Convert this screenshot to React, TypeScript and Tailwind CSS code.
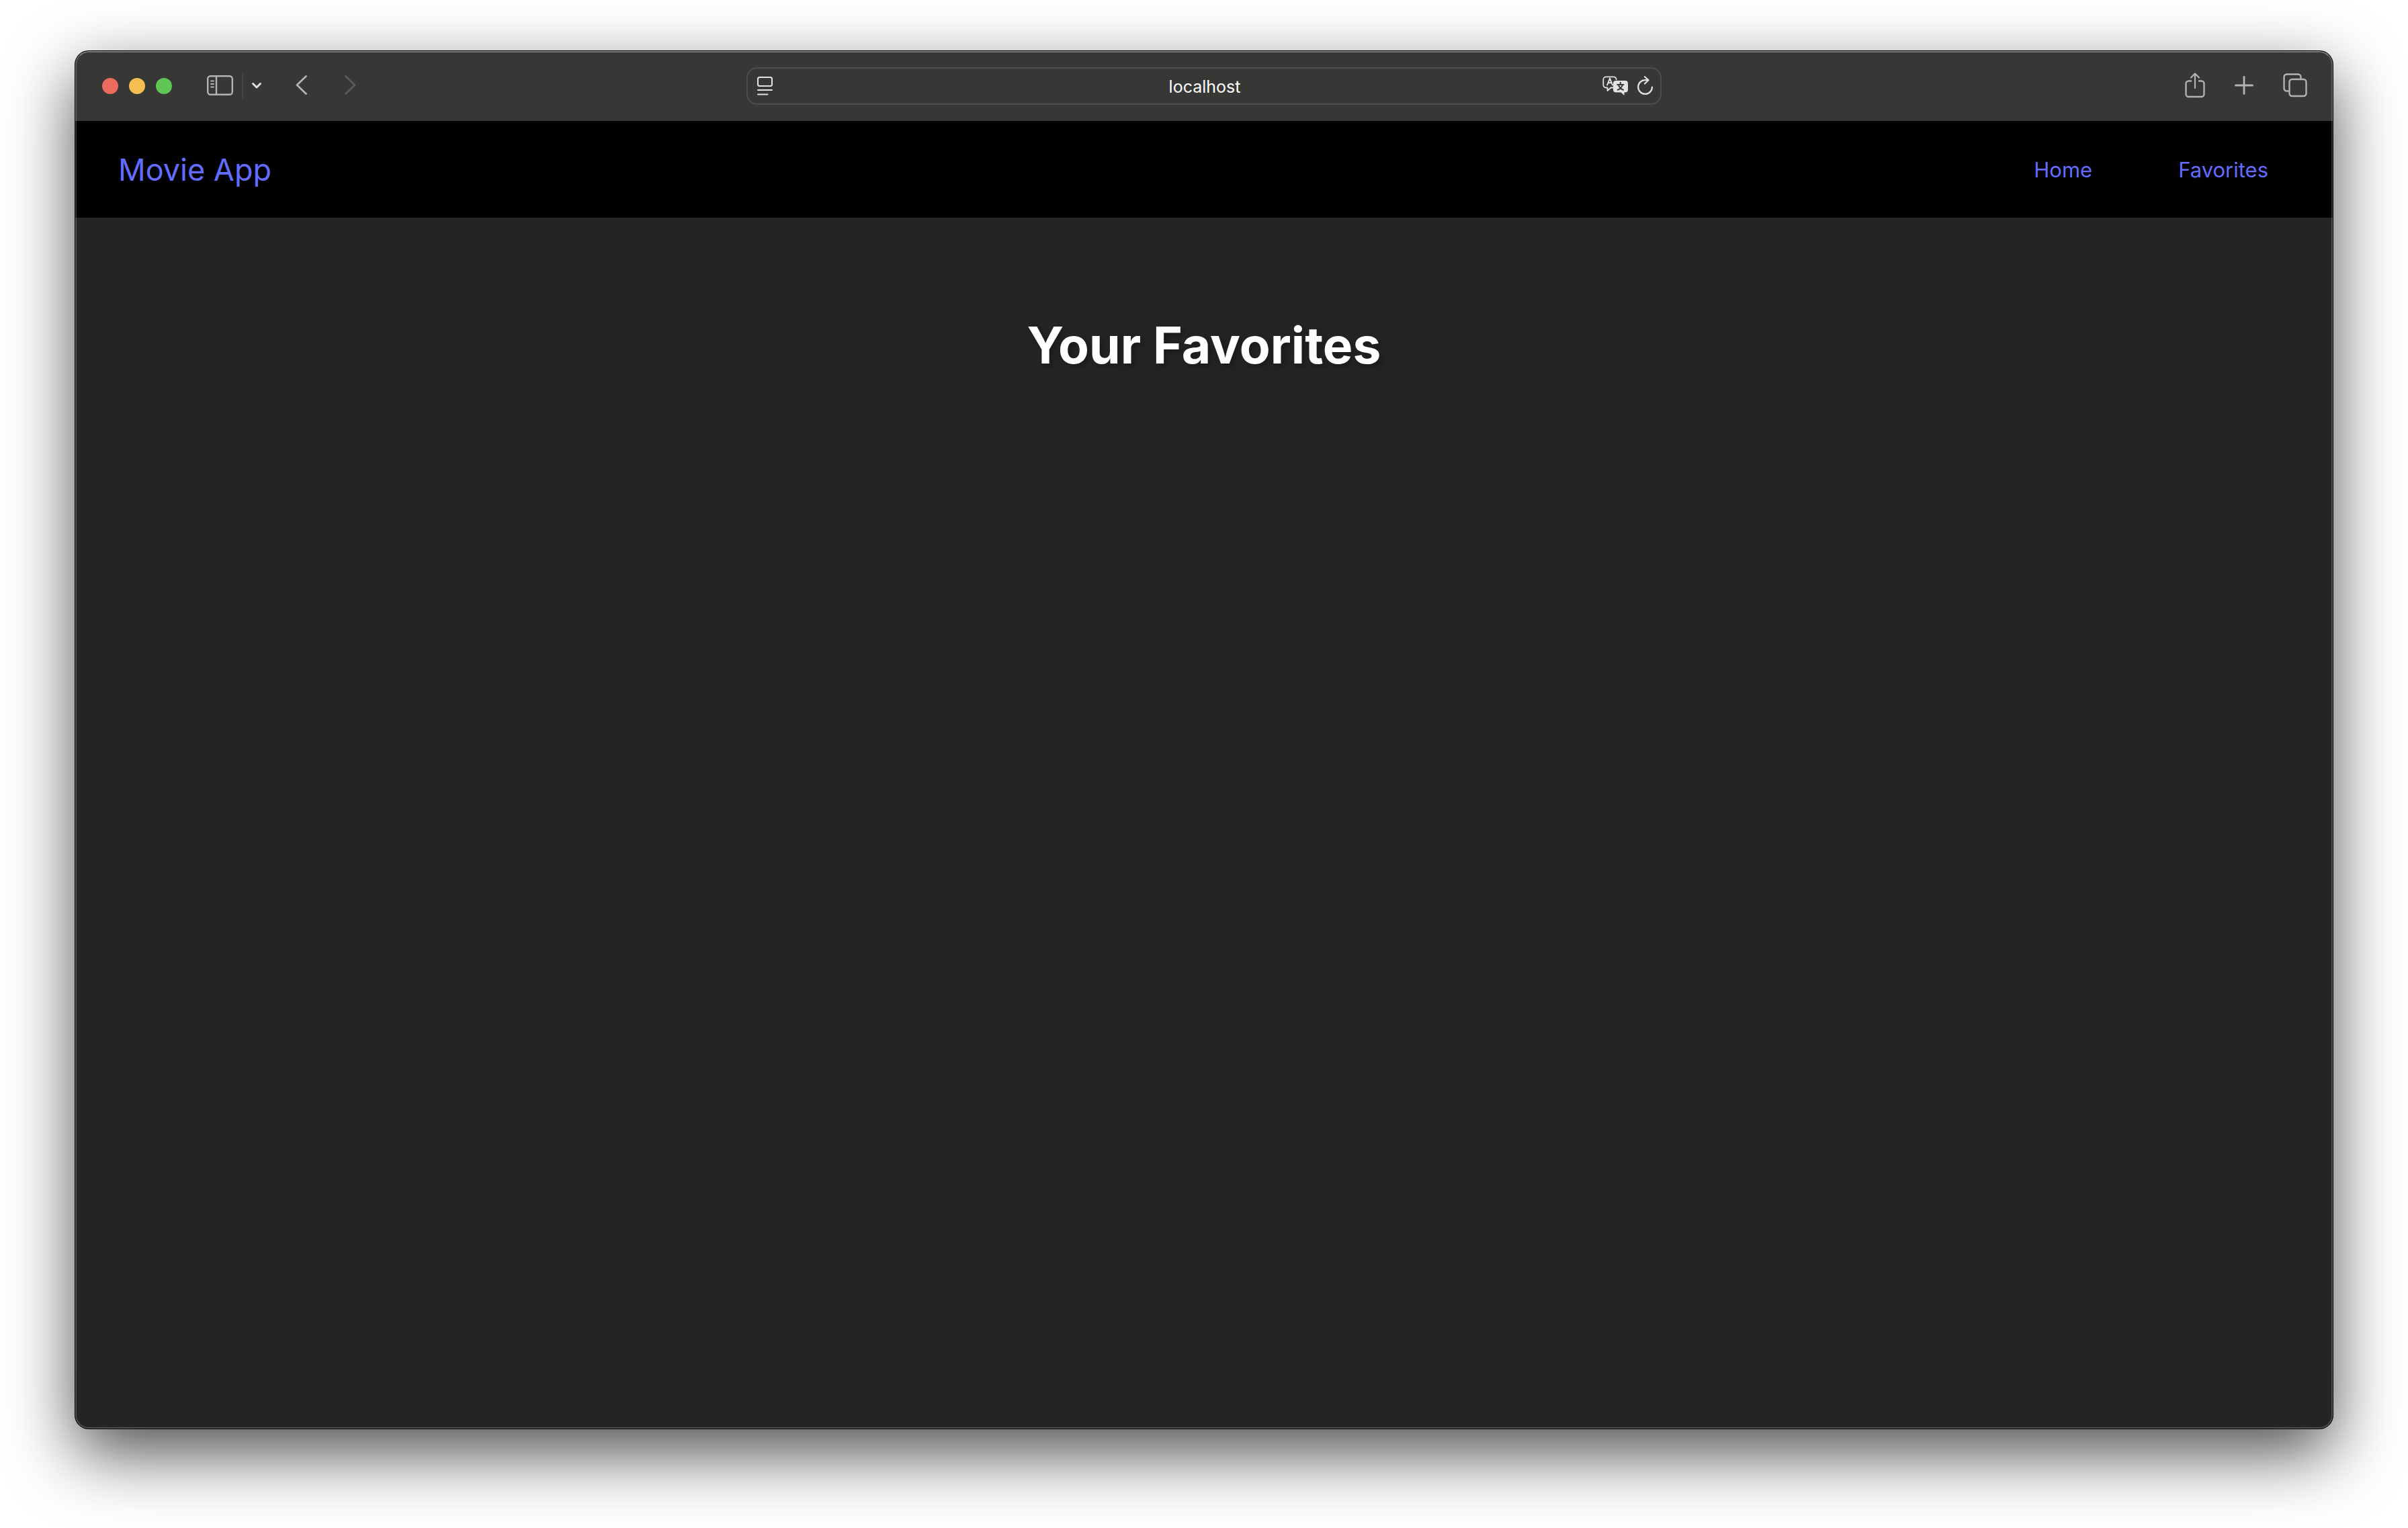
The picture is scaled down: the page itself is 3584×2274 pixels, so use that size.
import type { ReactNode } from "react";

function IconButton({ label, children, className = "" }: { label: string; children: ReactNode; className?: string }) {
  return (
    <button type="button" aria-label={label} className={`flex shrink-0 items-center justify-center ${className}`}>
      {children}
    </button>
  );
}

function SidebarIcon() {
  return (
    <svg width="40" height="32" viewBox="0 0 40 32" fill="none" stroke="currentColor" strokeWidth="2.4" strokeLinecap="round">
      <rect x="1.2" y="1.2" width="36.6" height="27.6" rx="4" />
      <path d="M14 1.5v27" />
      <path d="M6 8.5h4M6 13h4M6 17.5h4" strokeWidth="1.8" />
    </svg>
  );
}

function ReaderIcon() {
  return (
    <svg width="24" height="28" viewBox="0 0 24 28" fill="none" stroke="currentColor" strokeWidth="2" strokeLinecap="round">
      <rect x="1" y="1" width="21" height="13" rx="2.5" />
      <path d="M1 20h21M1 26.500h14.500" />
    </svg>
  );
}

function TranslateIcon() {
  return (
    <svg width="38" height="30" viewBox="0 0 38 30" fill="none" stroke="currentColor" strokeWidth="1.8" strokeLinecap="round" strokeLinejoin="round">
      <path d="M15.5 17.5 h-3 l-5 4.5 v-4.5 h-2 a4.2 4.2 0 0 1 -4.2 -4.2 v-7.8 a4.2 4.2 0 0 1 4.2 -4.2 h11 a4.2 4.2 0 0 1 4.2 3.9" />
      <path d="M7.2 13.5 l3.9 -10 l3.9 10 M8.6 10.3 h5" strokeWidth="2" />
      <path d="M20 7 h14 a4 4 0 0 1 4 4 v9.500 a4 4 0 0 1 -4 4 h-1.500 v4.500 l-5 -4.500 h-7.500 a4 4 0 0 1 -4 -4 v-9.500 a4 4 0 0 1 4 -4 z" fill="currentColor" stroke="none" />
      <path d="M26.800 9.800 v2.400 M22.300 12.900 h9.200 M24 13.400 c1 3.500 3.500 6 7 7.300 M29.800 13.400 c-1 3.500 -3.500 6 -7 7.300" stroke="#373735" strokeWidth="2" />
    </svg>
  );
}

function ReloadIcon() {
  return (
    <svg width="24" height="30" viewBox="0 0 24 30" fill="none" stroke="currentColor" strokeWidth="2.2" strokeLinecap="round" strokeLinejoin="round">
      <path d="M22 16.5 a10.4 10.4 0 1 1 -10.4 -10.4 h4.5" />
      <path d="M11 1.2 l5.5 5 l-5.5 5.3" />
    </svg>
  );
}

function ShareIcon() {
  return (
    <svg width="30" height="38" viewBox="0 0 30 38" fill="none" stroke="currentColor" strokeWidth="2.4" strokeLinecap="round" strokeLinejoin="round">
      <path d="M10 12.5 H5.5 a4 4 0 0 0 -4 4 V32 a4 4 0 0 0 4 4 H24.5 a4 4 0 0 0 4 -4 V16.5 a4 4 0 0 0 -4 -4 H20" strokeLinecap="butt" />
      <path d="M15 23 V2 M9 7.5 L15 1.5 L21 7.5" strokeWidth="2.2" />
    </svg>
  );
}

function TabsIcon() {
  return (
    <svg width="36" height="36" viewBox="0 0 36 36" fill="none" stroke="currentColor" strokeWidth="2.4">
      <path d="M8.5 26.5 H5.5 a4 4 0 0 1 -4 -4 V5.5 a4 4 0 0 1 4 -4 H22.5 a4 4 0 0 1 4 4 V8.5" />
      <rect x="9.5" y="9" width="25" height="25" rx="4" />
    </svg>
  );
}

function Toolbar() {
  return (
    <div className="grid h-[104px] grid-cols-[minmax(0,1fr)_minmax(0,1362px)_minmax(0,1fr)] items-center bg-[#373735] px-[38px] text-[#b3b3b1]">
      <div className="flex items-center pl-0.5">
        <div className="flex gap-4">
          <button type="button" aria-label="Close" className="size-6 rounded-full bg-[#ed6a5e]" />
          <button type="button" aria-label="Minimize" className="size-6 rounded-full bg-[#f5bf4f]" />
          <button type="button" aria-label="Zoom" className="size-6 rounded-full bg-[#61c554]" />
        </div>
        <IconButton label="Show sidebar" className="ml-[52px]">
          <SidebarIcon />
        </IconButton>
        <span className="ml-3 h-9 w-0.5 bg-[#444442]" />
        <IconButton label="Tab groups" className="ml-3 text-[#e0e0df]">
          <svg width="16" height="12" viewBox="0 0 16 12" fill="none" stroke="currentColor" strokeWidth="3" strokeLinecap="round" strokeLinejoin="round">
            <path d="M2.5 2.5 L8 8 L13.5 2.5" />
          </svg>
        </IconButton>
        <IconButton label="Back" className="ml-[50px]">
          <svg width="18" height="32" viewBox="0 0 18 32" fill="none" stroke="currentColor" strokeWidth="2.8" strokeLinecap="round" strokeLinejoin="round">
            <path d="M15.5 1.5 L2 14.5 L15.5 27.5" />
          </svg>
        </IconButton>
        <IconButton label="Forward" className="ml-[54px] text-[#5a5a58]">
          <svg width="18" height="32" viewBox="0 0 18 32" fill="none" stroke="currentColor" strokeWidth="2.8" strokeLinecap="round" strokeLinejoin="round">
            <path d="M2.5 1.5 L16 14.5 L2.5 27.5" />
          </svg>
        </IconButton>
      </div>

      <div className="grid h-14 grid-cols-[88px_minmax(0,1fr)_88px] items-center rounded-2xl border-2 border-[#4d4d4b] text-[#e2e2e0]">
        <IconButton label="Reader" className="ml-[14px] justify-self-start">
          <ReaderIcon />
        </IconButton>
        <input
          type="text"
          aria-label="Address"
          defaultValue="localhost"
          className="w-full min-w-0 bg-transparent pt-0.5 pl-0.5 text-center text-[25px] leading-8 text-white outline-none"
        />
        <div className="flex items-center gap-[14px] justify-self-end pr-2.5">
          <IconButton label="Translate">
            <TranslateIcon />
          </IconButton>
          <IconButton label="Reload">
            <ReloadIcon />
          </IconButton>
        </div>
      </div>

      <div className="flex items-center justify-end gap-11 pb-0.5">
        <IconButton label="Share">
          <ShareIcon />
        </IconButton>
        <IconButton label="New tab">
          <svg width="28" height="28" viewBox="0 0 28 28" fill="none" stroke="currentColor" strokeWidth="2.8" strokeLinecap="round">
            <path d="M14 1.5 V26.5 M1.5 14 H26.5" />
          </svg>
        </IconButton>
        <IconButton label="Tab overview">
          <TabsIcon />
        </IconButton>
      </div>
    </div>
  );
}

function NavBar() {
  return (
    <nav className="flex h-36 items-center justify-between bg-black px-16 pt-0.5 text-[#646cff]">
      <a href="#" className="text-[45px] leading-[72px]">
        Movie App
      </a>
      <div className="flex gap-16 text-[31px] leading-12">
        <a href="#home" className="px-8">
          Home
        </a>
        <a href="#favorites" className="px-8">
          Favorites
        </a>
      </div>
    </nav>
  );
}

export default function App() {
  return (
    <div className="flex min-h-screen flex-col bg-white px-28 pt-[76px] pb-[148px] font-['Inter','Liberation_Sans',sans-serif]">
      <div className="relative flex flex-1 flex-col overflow-hidden rounded-[20px] bg-[#242424] shadow-[0_0_0_1px_#000,0_36px_100px_rgba(0,0,0,0.7)]">
        <Toolbar />
        <NavBar />
        <main className="flex flex-1 flex-col items-center px-16 pt-[142px]">
          <h1 className="text-center text-[75px] leading-[96px] font-bold text-white [text-shadow:4px_4px_8px_rgba(0,0,0,0.3)]">
            Your Favorites
          </h1>
        </main>
        <div className="pointer-events-none absolute inset-0 rounded-[20px] border-2 border-white/20 border-t-white/35" />
      </div>
    </div>
  );
}
